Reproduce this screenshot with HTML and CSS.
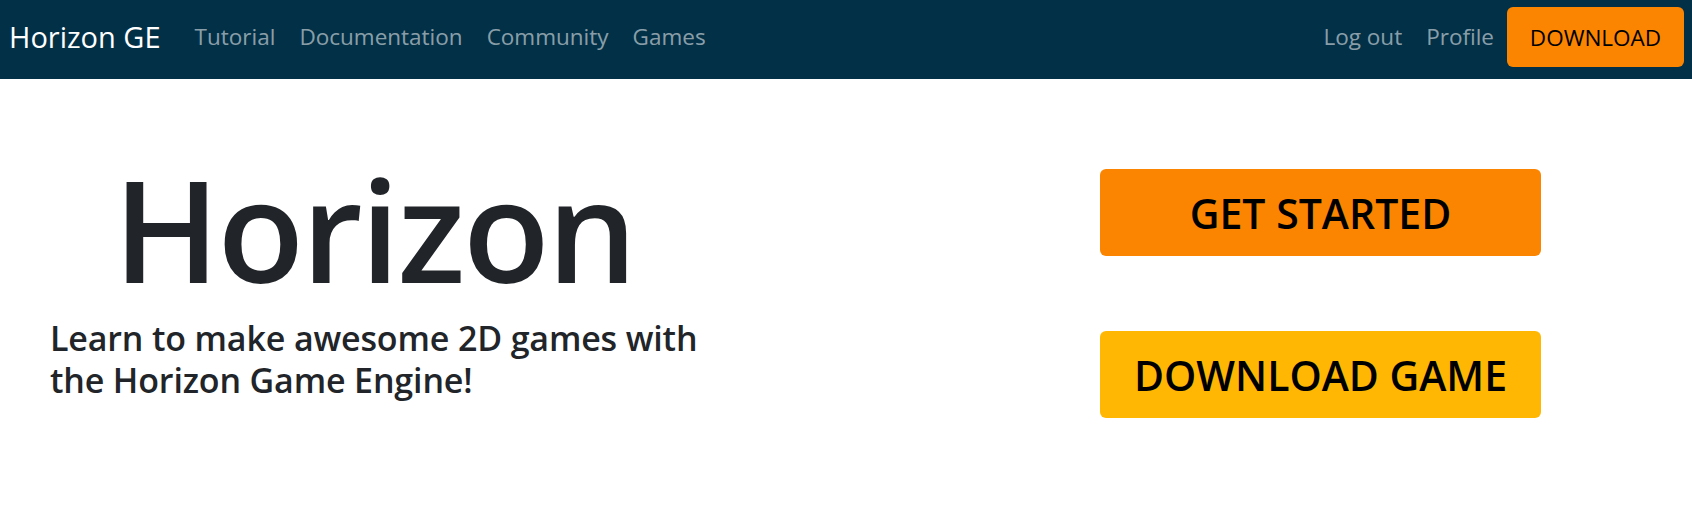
FILE: index.html
```html
<!DOCTYPE html>
<html lang="en">
<head>
<meta charset="utf-8">
<title>Horizon GE</title>
<link rel="stylesheet" href="styles.css">
</head>
<body>
<nav class="navbar">
  <a class="brand" href="#">Horizon GE</a>
  <ul class="nav nav-main">
    <li><a class="nav-link" href="#">Tutorial</a></li>
    <li><a class="nav-link" href="#">Documentation</a></li>
    <li><a class="nav-link" href="#">Community</a></li>
    <li><a class="nav-link" href="#">Games</a></li>
  </ul>
  <ul class="nav nav-user">
    <li><a class="nav-link" href="#">Log out</a></li>
    <li><a class="nav-link" href="#">Profile</a></li>
    <li><a class="nav-download" href="#">DOWNLOAD</a></li>
  </ul>
</nav>
<main class="hero">
  <section class="hero-text">
    <h1 class="hero-title">Horizon</h1>
    <h4 class="hero-lead">Learn to make awesome 2D games with the Horizon Game Engine!</h4>
  </section>
  <section class="hero-actions">
    <a class="cta cta-orange" href="#">GET STARTED</a>
    <a class="cta cta-yellow" href="#">DOWNLOAD GAME</a>
  </section>
</main>
</body>
</html>
```

FILE: styles.css
```css
* { box-sizing: border-box; }

body {
  margin: 0;
  font-family: "Open Sans", "Noto Sans", sans-serif;
  color: #212529;
  background: #ffffff;
}

a { text-decoration: none; }

.navbar {
  display: flex;
  align-items: center;
  height: 79px;
  padding: 7px 8px 12px 9px;
  background: #023047;
}

.brand {
  color: #ffffff;
  font-size: 29px;
  line-height: 40px;
  margin-right: 22px;
}

.nav {
  display: flex;
  align-items: center;
  list-style: none;
  margin: 0;
  padding: 0;
}

.nav-user { margin-left: auto; }

.nav-link {
  display: block;
  padding: 0 12px;
  font-size: 22.5px;
  line-height: 36px;
  color: rgba(255, 255, 255, 0.55);
}

.nav-download {
  display: flex;
  align-items: center;
  justify-content: center;
  width: 177px;
  height: 60px;
  margin-left: 1px;
  border-radius: 6px;
  background: #fb8500;
  color: #000000;
  font-size: 22.5px;
}

.hero {
  display: flex;
  padding: 64px 151px 0 50px;
}

.hero-text {
  width: 648px;
}

.hero-title {
  margin: 0;
  text-align: center;
  font-size: 142px;
  font-weight: 600;
  line-height: 170px;
  letter-spacing: -2.5px;
}

.hero-lead {
  margin: 4px -40px 0 0;
  font-size: 34px;
  font-weight: 600;
  line-height: 42px;
  letter-spacing: -0.15px;
}

.hero-actions {
  margin-left: auto;
  width: 441px;
  padding-top: 26px;
  display: flex;
  flex-direction: column;
  gap: 75px;
}

.cta {
  display: flex;
  align-items: center;
  justify-content: center;
  height: 87px;
  border-radius: 6px;
  color: #000000;
  font-size: 41px;
  font-weight: 600;
  line-height: 42px;
}

.cta-orange { background: #fb8500; }
.cta-yellow { background: #ffb703; }
```
